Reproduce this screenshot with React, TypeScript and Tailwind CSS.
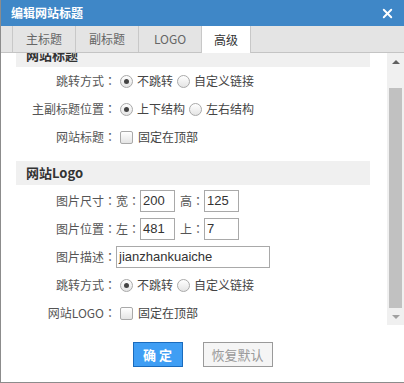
import { X } from 'lucide-react';

const font = "font-['Noto_Sans_CJK_SC','Microsoft_YaHei',sans-serif]";

// full-width colon centred in its cell, as in the original UI font
function Colon() {
  return <span className="font-['Noto_Sans_CJK_TC',sans-serif]">：</span>;
}

function Radio({ checked }: { checked?: boolean }) {
  return (
    <span className="w-[13px] h-[13px] rounded-full border border-[#a9a9a9] bg-gradient-to-b from-[#ffffff] to-[#e4e4e4] flex items-center justify-center shrink-0">
      {checked && <span className="w-[5px] h-[5px] rounded-full bg-[#444]" />}
    </span>
  );
}

function Checkbox() {
  return (
    <span className="block w-[13px] h-[13px] rounded-[2px] border border-[#a9a9a9] bg-gradient-to-b from-[#ffffff] to-[#e4e4e4] shrink-0" />
  );
}

function Row({ label, children }: { label: string; children: React.ReactNode }) {
  return (
    <div className="h-[28px] flex items-center">
      <span className="w-[100px] text-right text-[12px] text-[#555] whitespace-nowrap">
        {label}
        <Colon />
      </span>
      <div className="flex items-center text-[12px] text-[#444]">{children}</div>
    </div>
  );
}

function Jump() {
  return (
    <>
      <span className="ml-[4px]"><Radio checked /></span>
      <span className="ml-[4px]">不跳转</span>
      <span className="ml-[4px]"><Radio /></span>
      <span className="ml-[4px]">自定义链接</span>
    </>
  );
}

function Input({ value, w }: { value: string; w: string }) {
  return (
    <span className={`${w} h-[22px] border border-[#a9a9a9] bg-white flex items-center pl-[2px] text-[13px] text-[#333] font-['Liberation_Sans',sans-serif]`}>
      {value}
    </span>
  );
}

function SectionHead({ title, className = '' }: { title: string; className?: string }) {
  return (
    <div className={`h-[24px] bg-[#f0f0f0] flex items-center pl-[10px] text-[13px] font-bold text-[#333] ${className}`}>
      {title}
    </div>
  );
}

export default function App() {
  const tabs = ['主标题', '副标题', 'LOGO', '高级'];
  return (
    <div className={`w-[404px] h-[383px] bg-white border-l border-b border-[#8c8c8c] flex flex-col overflow-hidden ${font}`}>
      <div className="h-[26px] bg-[#3f87c7] flex items-center justify-between pl-[10px] pr-[9px] shrink-0">
        <span className="text-white text-[12px] font-bold">编辑网站标题</span>
        <X size={15} strokeWidth={3} className="text-white" />
      </div>

      <div className="h-[27px] bg-[#e4e4e4] border-b border-[#c4c4c4] flex pl-[11px] shrink-0">
        {tabs.map((t, i) => {
          const active = i === 3;
          return (
            <div
              key={t}
              className={`flex items-center justify-center text-[12px] border-l border-[#c8c8c8] ${
                active ? 'w-[50px] bg-white text-[#333] h-[27px] border-r' : 'w-[63px] text-[#666] h-[26px]'
              }`}
            >
              {t}
            </div>
          );
        })}
      </div>

      <div className="h-[272px] flex shrink-0">
        <div className="flex-1 overflow-hidden pl-[15px] pr-[17px]">
          <SectionHead title="网站标题" className="-mt-[10px]" />
          <Row label="跳转方式">
            <Jump />
          </Row>
          <Row label="主副标题位置">
            <span className="ml-[4px]"><Radio checked /></span>
            <span className="ml-[4px]">上下结构</span>
            <span className="ml-[4px]"><Radio /></span>
            <span className="ml-[4px]">左右结构</span>
          </Row>
          <Row label="网站标题">
            <span className="ml-[4px]"><Checkbox /></span>
            <span className="ml-[5px]">固定在顶部</span>
          </Row>

          <SectionHead title="网站Logo" className="mt-[10px]" />
          <div className="mt-[2px]">
            <Row label="图片尺寸">
              <span className="text-[#555]">宽<Colon /></span>
              <Input value="200" w="w-[35px]" />
              <span className="ml-[5px] text-[#555]">高<Colon /></span>
              <Input value="125" w="w-[35px]" />
            </Row>
            <Row label="图片位置">
              <span className="text-[#555]">左<Colon /></span>
              <Input value="481" w="w-[35px]" />
              <span className="ml-[5px] text-[#555]">上<Colon /></span>
              <Input value="7" w="w-[35px]" />
            </Row>
            <Row label="图片描述">
              <Input value="jianzhankuaiche" w="w-[154px]" />
            </Row>
            <Row label="跳转方式">
              <Jump />
            </Row>
            <Row label="网站LOGO">
              <span className="ml-[4px]"><Checkbox /></span>
              <span className="ml-[5px]">固定在顶部</span>
            </Row>
          </div>
        </div>

        <div className="w-[17px] bg-[#f0f0f0] flex flex-col items-center shrink-0">
          <div className="h-[17px] flex items-center justify-center">
            <span className="w-0 h-0 border-l-[4px] border-r-[4px] border-b-[4px] border-l-transparent border-r-transparent border-b-[#606060]" />
          </div>
          <div className="mt-[18px] w-[13px] h-[220px] bg-[#c1c1c1]" />
          <div className="flex-1 flex items-center justify-center">
            <span className="w-0 h-0 border-l-[4px] border-r-[4px] border-t-[4px] border-l-transparent border-r-transparent border-t-[#a0a0a0]" />
          </div>
        </div>
      </div>

      <div className="flex-1 flex justify-center items-start pt-[17px] gap-[20px]">
        <button className="w-[50px] h-[25px] bg-[#3f9ef4] border border-[#1a6bbd] text-white text-[13px] font-bold">
          确 定
        </button>
        <button className="w-[70px] h-[25px] bg-[#f5f5f5] border border-[#9a9a9a] text-[#999] text-[13px]">
          恢复默认
        </button>
      </div>
    </div>
  );
}
